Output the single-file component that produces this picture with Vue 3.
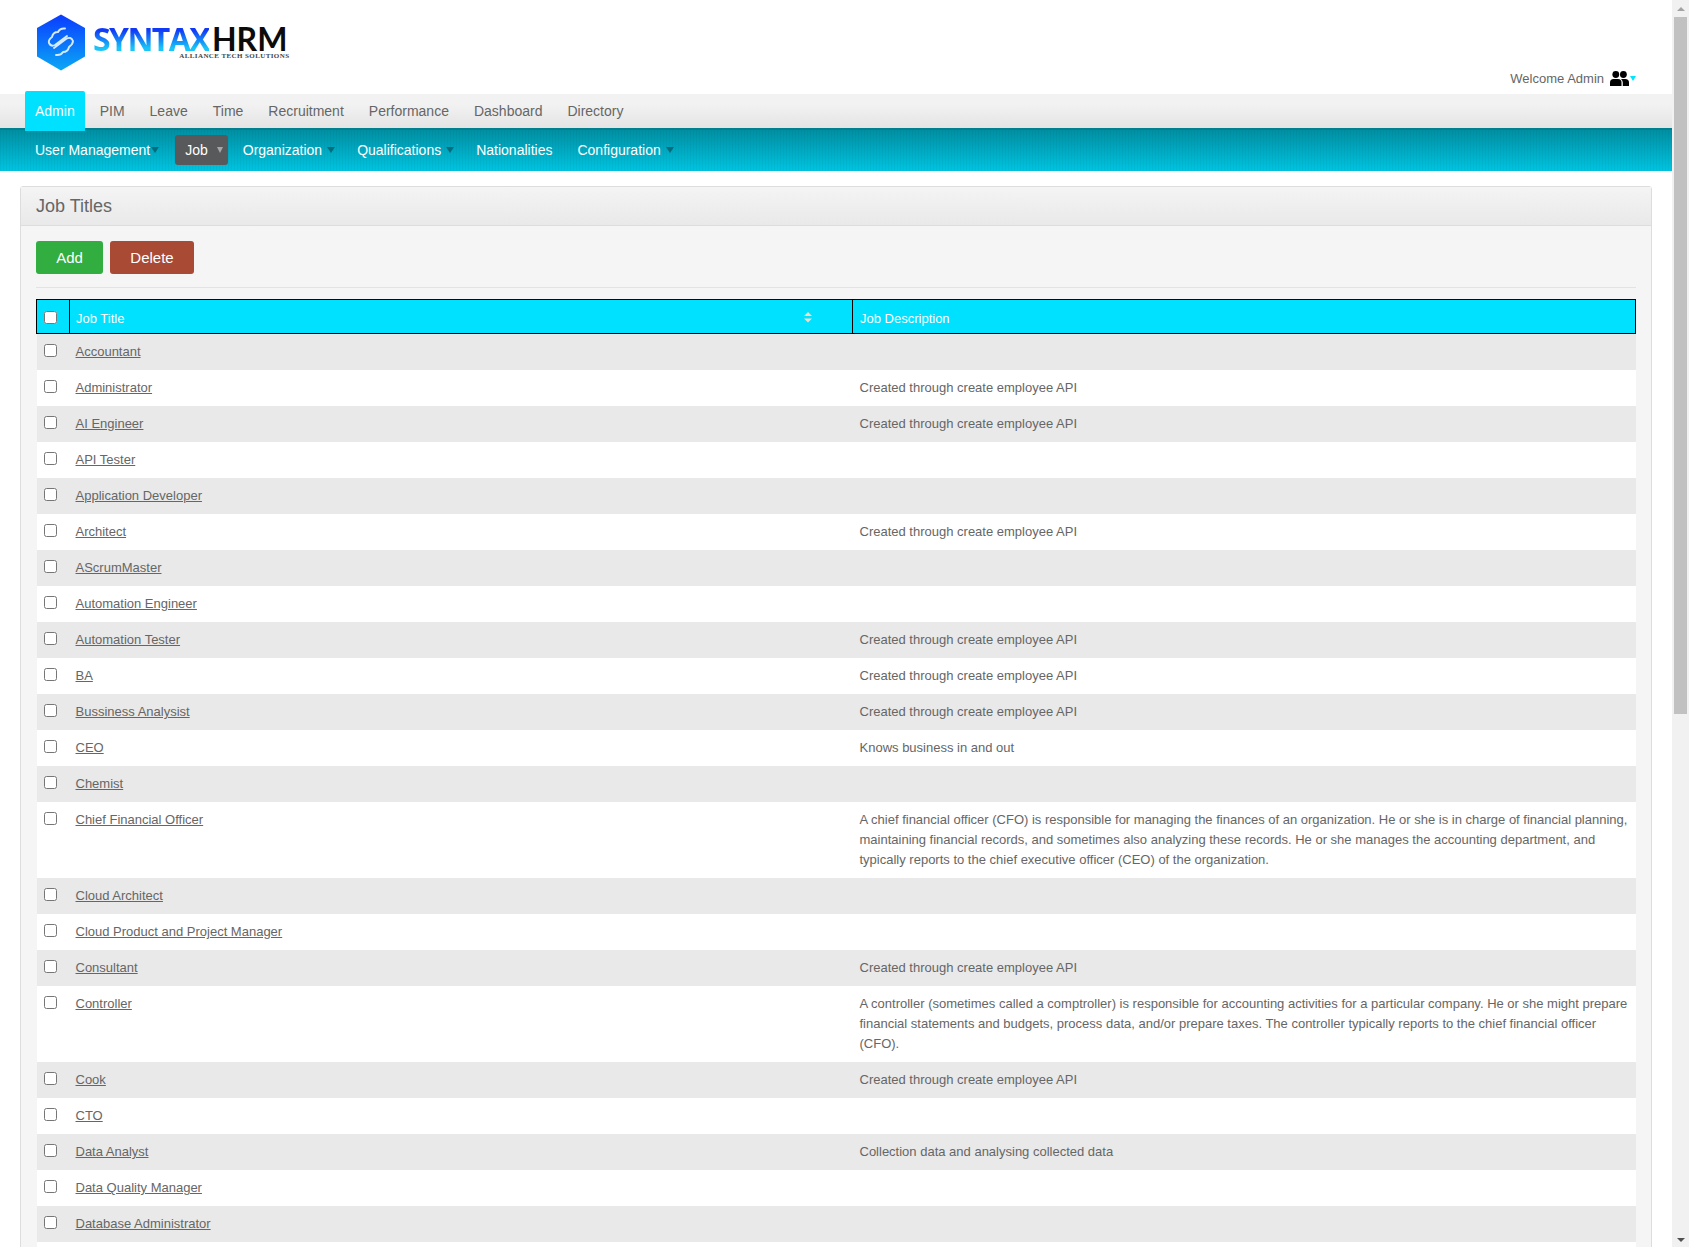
<template>
    <div class="shell">
        <div class="page">
            <header class="top">
                <div class="logo">
                    <svg class="logo-mark" width="50" height="57" viewBox="0 0 50 57">
                        <defs>
                            <linearGradient id="hex" x1="0" y1="0" x2="0" y2="1">
                                <stop offset="0" stop-color="#0a3cff" />
                                <stop offset="1" stop-color="#0aa8f5" />
                            </linearGradient>
                        </defs>
                        <path d="M25 0.5 L49 14 V42.5 L25 56.5 L1 42.5 V14 Z" fill="url(#hex)" />
                        <path
                            d="M29 14.5 Q24 14 22 18 Q17 18 16 23 Q12 26 13 29 Q15 33 19 31 L31 22 M20 41 Q25 41.5 27 38 Q32 38 33 33 Q37 30 37 27 Q35 22 30 25 L18 34"
                            fill="none"
                            stroke="#d4eaff"
                            stroke-width="1.9"
                            stroke-linecap="round"
                            stroke-linejoin="round"
                        />
                    </svg>
                    <div class="logo-words">
                        <div class="logo-name"><span class="syntax">SYNTAX</span><span class="hrm">HRM</span></div>
                        <div class="logo-tag">ALLIANCE TECH SOLUTIONS</div>
                    </div>
                </div>
                <div class="welcome">
                    <span>Welcome Admin</span>
                    <svg width="19" height="15" viewBox="0 0 19 15">
                        <circle cx="5.8" cy="3.5" r="3.4" fill="#000" />
                        <circle cx="13.4" cy="3.5" r="3.4" fill="#000" />
                        <path d="M0 15 V11.5 Q0 8 3.5 8 H8 Q11.5 8 11.5 11.5 V15 Z" fill="#000" />
                        <path d="M11 8 H15.2 Q19 8 19 11.5 V15 H12.8 V11.5 Q12.8 9.5 11 8 Z" fill="#000" />
                    </svg>
                    <span class="welcome-caret"></span>
                </div>
            </header>

            <nav class="main-nav">
                <a v-for="item in mainMenu" :key="item" class="main-link" :class="{ active: item === 'Admin' }">{{ item }}</a>
            </nav>

            <nav class="sub-nav">
                <a
                    v-for="item in subMenu"
                    :key="item.label"
                    class="sub-link"
                    :class="[item.cls, { current: item.label === 'Job' }]"
                >
                    {{ item.label }}<span v-if="item.caret" class="sub-caret"></span>
                </a>
            </nav>

            <section class="panel">
                <h1 class="panel-head">Job Titles</h1>
                <div class="panel-body">
                    <div class="actions">
                        <button class="btn add">Add</button>
                        <button class="btn delete">Delete</button>
                    </div>
                    <table class="titles">
                        <colgroup>
                            <col class="col-check" />
                            <col class="col-title" />
                            <col />
                        </colgroup>
                        <thead>
                            <tr>
                                <th class="check"><input type="checkbox" /></th>
                                <th class="sortable">
                                    Job Title
                                    <svg class="sort" width="8" height="11" viewBox="0 0 8 11">
                                        <path d="M4 0 L8 4 H0 Z" fill="#f3ddc4" />
                                        <path d="M0 6.5 H8 L4 10.5 Z" fill="#f3ddc4" />
                                    </svg>
                                </th>
                                <th>Job Description</th>
                            </tr>
                        </thead>
                        <tbody>
                            <tr v-for="row in jobs" :key="row.title">
                                <td class="check"><input type="checkbox" /></td>
                                <td><a class="job-link">{{ row.title }}</a></td>
                                <td class="desc">{{ row.text }}</td>
                            </tr>
                        </tbody>
                    </table>
                </div>
            </section>
        </div>

        <aside class="scrollbar">
            <span class="arrow up"></span>
            <span class="thumb"></span>
            <span class="arrow down"></span>
        </aside>
    </div>
</template>

<script setup>
const api = "Created through create employee API"

const mainMenu = ["Admin", "PIM", "Leave", "Time", "Recruitment", "Performance", "Dashboard", "Directory"]

const subMenu = [
    { label: "User Management", caret: true, cls: "tight" },
    { label: "Job", caret: true },
    { label: "Organization", caret: true, cls: "snug" },
    { label: "Qualifications", caret: true, cls: "snug" },
    { label: "Nationalities", caret: false, cls: "wide" },
    { label: "Configuration", caret: true },
]

const jobs = [
    { title: "Accountant", text: "" },
    { title: "Administrator", text: api },
    { title: "AI Engineer", text: api },
    { title: "API Tester", text: "" },
    { title: "Application Developer", text: "" },
    { title: "Architect", text: api },
    { title: "AScrumMaster", text: "" },
    { title: "Automation Engineer", text: "" },
    { title: "Automation Tester", text: api },
    { title: "BA", text: api },
    { title: "Bussiness Analysist", text: api },
    { title: "CEO", text: "Knows business in and out" },
    { title: "Chemist", text: "" },
    {
        title: "Chief Financial Officer",
        text: "A chief financial officer (CFO) is responsible for managing the finances of an organization. He or she is in charge of financial planning, maintaining financial records, and sometimes also analyzing these records. He or she manages the accounting department, and typically reports to the chief executive officer (CEO) of the organization.",
    },
    { title: "Cloud Architect", text: "" },
    { title: "Cloud Product and Project Manager", text: "" },
    { title: "Consultant", text: api },
    {
        title: "Controller",
        text: "A controller (sometimes called a comptroller) is responsible for accounting activities for a particular company. He or she might prepare financial statements and budgets, process data, and/or prepare taxes. The controller typically reports to the chief financial officer (CFO).",
    },
    { title: "Cook", text: api },
    { title: "CTO", text: "" },
    { title: "Data Analyst", text: "Collection data and analysing collected data" },
    { title: "Data Quality Manager", text: "" },
    { title: "Database Administrator", text: "" },
    { title: "", text: "" },
]
</script>

<style>
html,
body {
    margin: 0;
    height: 100%;
    overflow: hidden;
    background: #fff;
}
</style>

<style scoped>
.shell {
    display: flex;
    height: 1247px;
    overflow: hidden;
    font-family: "Liberation Sans", Arial, sans-serif;
    color: #666;
}

.page {
    flex: 1 1 0;
    min-width: 0;
    overflow: hidden;
}

.top {
    display: flex;
    justify-content: space-between;
    height: 94px;
    box-sizing: border-box;
    padding: 14px 36px 0 36px;
}

.logo {
    display: flex;
    align-items: flex-start;
    gap: 7px;
}

.logo-mark {
    display: block;
}

.logo-words {
    padding-top: 10px;
}

.logo-name {
    display: flex;
    align-items: baseline;
    line-height: 30px;
    height: 30px;
}

.syntax {
    font-family: "Open Sans", sans-serif;
    font-size: 32px;
    font-weight: 700;
    letter-spacing: -1.6px;
    background: linear-gradient(180deg, #1038f5 20%, #18c4f8 80%);
    -webkit-background-clip: text;
    background-clip: text;
    color: transparent;
}

.hrm {
    margin-left: 3px;
    font-family: Lato, sans-serif;
    font-size: 32px;
    font-weight: 700;
    color: #0b0b0b;
}

.logo-tag {
    margin: -1px -2px 0 0;
    text-align: right;
    font-family: "Liberation Serif", serif;
    font-size: 7px;
    line-height: 7px;
    font-weight: 700;
    letter-spacing: 0.4px;
    color: #444;
}

.welcome {
    display: flex;
    align-items: center;
    align-self: flex-start;
    margin-top: 57px;
    font-size: 13px;
    color: #666;
}

.welcome svg {
    margin-left: 6px;
}

.welcome-caret {
    margin: 0 0 0 1px;
    border-left: 3px solid transparent;
    border-right: 3px solid transparent;
    border-top: 5px solid #00e5ff;
}

.main-nav {
    display: flex;
    align-items: flex-start;
    height: 34px;
    padding-left: 25px;
    background: linear-gradient(180deg, #f2f2f2 30%, #e4e4e4 100%);
}

.main-link {
    height: 34px;
    padding: 0 10px;
    margin-right: 5px;
    font-size: 14px;
    line-height: 34px;
    color: #666;
}

.main-link.active {
    position: relative;
    z-index: 1;
    height: 40px;
    margin-top: -3px;
    margin-right: 5px;
    line-height: 40px;
    color: #fff;
    background: #00e1ff;
    border-radius: 2px 2px 0 0;
}

.sub-nav {
    display: flex;
    align-items: flex-start;
    height: 43px;
    box-sizing: border-box;
    padding: 5px 0 0 25px;
    border-top: 2px solid #00808f;
    background:
        repeating-linear-gradient(90deg, rgba(0, 0, 0, 0.035) 0 1px, transparent 1px 3px),
        linear-gradient(180deg, #008fa3 0%, #00c4e0 100%);
}

.sub-link {
    display: flex;
    align-items: center;
    height: 30px;
    padding: 0 10px;
    margin-right: 3px;
    font-size: 14px;
    color: #fff;
    border-radius: 3px;
}

.sub-link.snug {
    margin-right: 2px;
}

.sub-link.wide {
    margin-right: 5px;
}

.sub-link.current {
    padding-right: 5px;
    background: #58595b;
    margin: 0 5px 0 3px;
}

.sub-caret {
    margin-left: 5px;
    border-left: 4px solid transparent;
    border-right: 4px solid transparent;
    border-top: 6px solid #006d7d;
}

.tight .sub-caret {
    margin-left: 1px;
}

.current .sub-caret {
    margin-left: 9px;
    border-left-width: 3px;
    border-right-width: 3px;
    border-top-color: #a6a6a6;
}

.panel {
    margin: 15px 20px 0 20px;
    border: 1px solid #ddd;
    border-radius: 3px 3px 0 0;
    background: #f5f5f5;
}

.panel-head {
    margin: 0;
    height: 39px;
    box-sizing: border-box;
    padding: 0 15px;
    font-size: 18px;
    font-weight: 400;
    line-height: 38px;
    color: #666;
    background: linear-gradient(180deg, #f4f4f4, #e9e9e9);
    border-bottom: 1px solid #ddd;
}

.panel-body {
    padding: 15px;
}

.actions {
    display: flex;
    gap: 7px;
    padding-bottom: 13px;
    margin-bottom: 11px;
    border-bottom: 1px solid #e3e3e3;
}

.btn {
    height: 33px;
    border: 0;
    border-radius: 3px;
    font-family: inherit;
    font-size: 15px;
    color: #fff;
}

.btn.add {
    width: 67px;
    background: #32ad40;
}

.btn.delete {
    width: 84px;
    background: #a94a35;
}

.titles {
    width: 100%;
    table-layout: fixed;
    border-collapse: collapse;
    font-size: 13px;
    line-height: 20px;
}

.col-check {
    width: 33px;
}

.col-title {
    width: 783px;
}

th {
    position: relative;
    box-sizing: border-box;
    height: 34px;
    padding: 5px 7px 0 7px;
    text-align: left;
    font-size: 13px;
    font-weight: 400;
    color: #fff;
    background: #00e1ff;
    border: 1px solid #000;
}

th.sortable {
    padding-left: 6px;
}

td {
    padding: 8px 6px;
    vertical-align: top;
    color: #666;
}

td.desc {
    padding-left: 7px;
}

tbody tr:nth-child(odd) {
    background: #e9e9e9;
}

tbody tr:nth-child(even) {
    background: #fff;
}

.check {
    padding: 0;
    text-align: left;
}

td.check {
    padding-top: 10px;
}

th.check {
    padding-top: 1px;
}

input[type="checkbox"] {
    display: block;
    width: 13px;
    height: 13px;
    margin: 0 0 0 7px;
}

.job-link {
    color: #666;
    text-decoration: underline;
}

.sort {
    position: absolute;
    right: 40px;
    top: 12px;
}

.scrollbar {
    position: relative;
    flex: 0 0 17px;
    display: flex;
    flex-direction: column;
    align-items: center;
    background: #f1f1f1;
}

.thumb {
    display: block;
    width: 13px;
    height: 697px;
    background: #c1c1c1;
}

.arrow {
    display: block;
    width: 0;
    height: 0;
    border-left: 4px solid transparent;
    border-right: 4px solid transparent;
}

.arrow.up {
    margin: 7px 0 6px;
    border-bottom: 4px solid #a3a3a3;
}

.arrow.down {
    position: absolute;
    bottom: 5px;
    border-top: 4px solid #505050;
}
</style>
